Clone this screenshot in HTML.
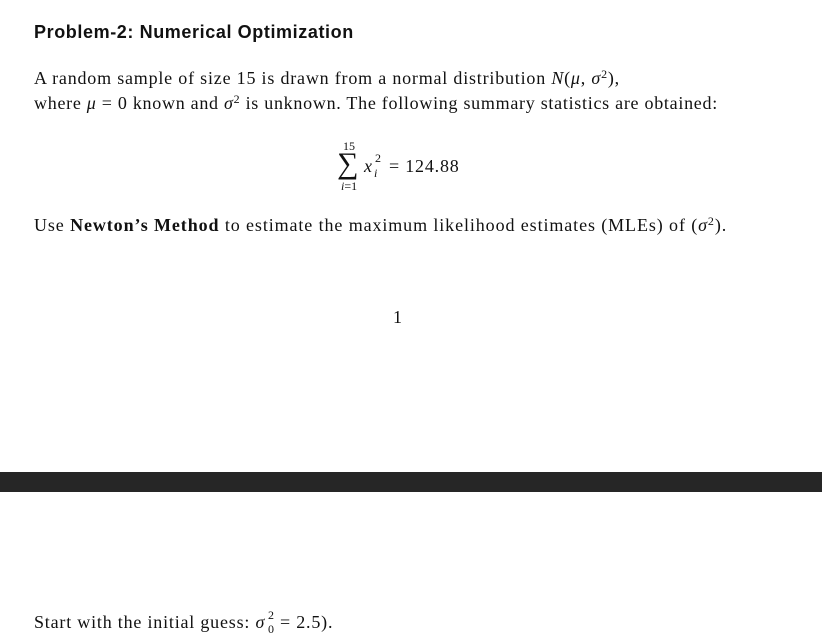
<!DOCTYPE html>
<html><head><meta charset="utf-8"><style>
body{margin:0;width:822px;height:641px;background:#fff;position:relative;overflow:hidden;color:#111;}
.t{position:absolute;white-space:nowrap;font-family:"Liberation Serif",serif;font-size:18px;letter-spacing:0.8px;line-height:1;}
.h{position:absolute;font-family:"Liberation Sans",sans-serif;font-weight:bold;font-size:18px;letter-spacing:0.6px;left:34px;top:22px;white-space:nowrap;}
i{font-style:italic}
.s{position:absolute;font-family:"Liberation Serif",serif;font-size:12px;line-height:1;white-space:nowrap;}
.bar{position:absolute;left:0;top:472px;width:822px;height:20px;background:#262626;}
</style></head><body>
<div class="h">Problem-2: Numerical Optimization</div>
<div class="t" style="left:34px;top:68px;">A random sample of size 15 is drawn from a normal distribution <i>N</i>(<i>μ</i>, <i>σ</i><span style="font-size:12px;vertical-align:6px">2</span>),</div>
<div class="t" style="left:34px;top:93px;letter-spacing:0.72px">where <i>μ</i> = 0 known and <i>σ</i><span style="font-size:12px;vertical-align:6px">2</span> is unknown. The following summary statistics are obtained:</div>
<div class="s" style="left:343px;top:140px;">15</div>
<div class="t" style="left:337px;top:149px;font-size:30px;letter-spacing:0">∑</div>
<div class="s" style="left:341px;top:180px;"><i>i</i>=1</div>
<div class="t" style="left:364px;top:157px;"><i>x</i></div>
<div class="s" style="left:375px;top:152px;">2</div>
<div class="s" style="left:374px;top:167px;"><i>i</i></div>
<div class="t" style="left:389px;top:157px;">= 124.88</div>
<div class="t" style="left:34px;top:215px;letter-spacing:0.9px">Use <b>Newton’s Method</b> to estimate the maximum likelihood estimates (MLEs) of (<i>σ</i><span style="font-size:12px;vertical-align:6px">2</span>).</div>
<div class="t" style="left:393px;top:308px;">1</div>
<div class="bar"></div>
<div class="t" style="left:34px;top:613px;">Start with the initial guess: <i>σ</i></div>
<div class="s" style="left:268px;top:609px;">2</div>
<div class="s" style="left:268px;top:623px;">0</div>
<div class="t" style="left:280px;top:613px;">= 2.5).</div>
</body></html>
